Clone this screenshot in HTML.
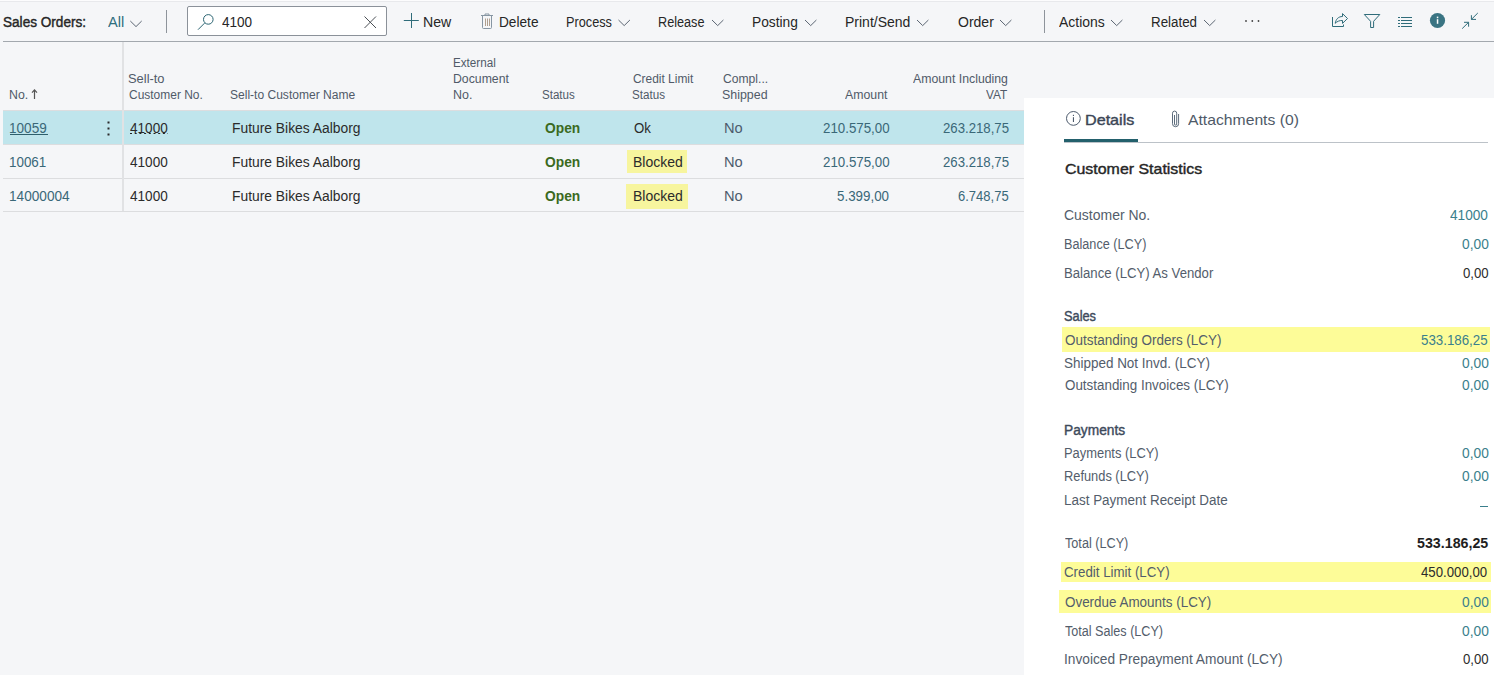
<!DOCTYPE html>
<html><head><meta charset="utf-8"><style>
html,body{margin:0;padding:0;}
body{width:1494px;height:675px;overflow:hidden;position:relative;background:#f5f6f8;font-family:"Liberation Sans",sans-serif;}
.t{position:absolute;white-space:nowrap;line-height:1;transform-origin:0 0;}
.a{position:absolute;}
</style></head><body>
<div class="a" style="left:0;top:0;width:1494px;height:1px;background:#fcfcfd"></div>
<div class="a" style="left:0;top:1px;width:1494px;height:1px;background:#e8e9ec"></div>
<div class="a" style="left:3px;top:41px;width:1491px;height:1px;background:#a3a8ae"></div>
<div class="a" style="left:166px;top:10px;width:1px;height:23px;background:#8e949b"></div>
<div class="a" style="left:1044px;top:10px;width:1px;height:23px;background:#8e949b"></div>
<div class="a" style="left:187px;top:6px;width:198px;height:28px;border:1px solid #8b9199;border-radius:2px;background:#fff"></div>
<div class="a" style="left:3px;top:110px;width:1021px;height:34px;background:#bfe5ec"></div>
<div class="a" style="left:3px;top:144px;width:1021px;height:1px;background:#dcdddf"></div>
<div class="a" style="left:3px;top:178px;width:1021px;height:1px;background:#dcdddf"></div>
<div class="a" style="left:3px;top:211px;width:1021px;height:1px;background:#dcdddf"></div>
<div class="a" style="left:3px;top:110px;width:1021px;height:1px;background:#dcdddf"></div>
<div class="a" style="left:122px;top:42px;width:2px;height:169px;background:#e1e2e4"></div>
<div class="a" style="left:627px;top:150px;width:60px;height:23px;background:#f7f59e"></div>
<div class="a" style="left:626px;top:184px;width:62px;height:25px;background:#f7f59e"></div>
<div class="a" style="left:1024px;top:98px;width:470px;height:577px;background:#fff"></div>
<div class="a" style="left:1064px;top:142px;width:424px;height:1px;background:#bcc2c8"></div>
<div class="a" style="left:1064px;top:139px;width:74px;height:3px;background:#23606c"></div>
<div class="a" style="left:1062px;top:327px;width:428px;height:25px;background:#fdfc98"></div>
<div class="a" style="left:1061px;top:562px;width:430px;height:20px;background:#fdfc98"></div>
<div class="a" style="left:1059px;top:590px;width:432px;height:23px;background:#fdfc98"></div>
<svg class="a" style="left:0;top:0" width="1494" height="675" viewBox="0 0 1494 675"><circle cx="208.3" cy="19.4" r="4.8" fill="none" stroke="#2a6472" stroke-width="1"/><line x1="204.6" y1="23.1" x2="198" y2="29.7" stroke="#2a6472" stroke-width="1"/><line x1="364.5" y1="16.5" x2="376" y2="28" stroke="#4a4f55" stroke-width="1"/><line x1="376" y1="16.5" x2="364.5" y2="28" stroke="#4a4f55" stroke-width="1"/><line x1="403.8" y1="20.5" x2="418.8" y2="20.5" stroke="#2f6c7a" stroke-width="1"/><line x1="411.5" y1="13" x2="411.5" y2="28" stroke="#2f6c7a" stroke-width="1"/><path d="M482.5 16 V27.5 Q482.5 28.5 483.5 28.5 H490.5 Q491.5 28.5 491.5 27.5 V16" fill="none" stroke="#8796a3" stroke-width="1"/><line x1="481" y1="15.5" x2="493" y2="15.5" stroke="#8796a3" stroke-width="1"/><path d="M485 15.5 V14 H489 V15.5" fill="none" stroke="#8796a3" stroke-width="1"/><line x1="485.5" y1="18.5" x2="485.5" y2="26" stroke="#b0a090" stroke-width="1"/><line x1="487.5" y1="18.5" x2="487.5" y2="26" stroke="#b0a090" stroke-width="1"/><line x1="489.5" y1="18.5" x2="489.5" y2="26" stroke="#b0a090" stroke-width="1"/><polyline points="130.3,21 136.0,26.6 141.70000000000002,21" fill="none" stroke="#5c6673" stroke-width="1"/><polyline points="618.5,20 624.2,25.6 629.9,20" fill="none" stroke="#5c6673" stroke-width="1"/><polyline points="712,20 717.7,25.6 723.4,20" fill="none" stroke="#5c6673" stroke-width="1"/><polyline points="805,20 810.7,25.6 816.4,20" fill="none" stroke="#5c6673" stroke-width="1"/><polyline points="917,20 922.7,25.6 928.4,20" fill="none" stroke="#5c6673" stroke-width="1"/><polyline points="1000,20 1005.7,25.6 1011.4,20" fill="none" stroke="#5c6673" stroke-width="1"/><polyline points="1111,20 1116.7,25.6 1122.4,20" fill="none" stroke="#5c6673" stroke-width="1"/><polyline points="1204,20 1209.7,25.6 1215.4,20" fill="none" stroke="#5c6673" stroke-width="1"/><circle cx="1246" cy="21" r="0.9" fill="#444"/><circle cx="1252.3" cy="21" r="0.9" fill="#444"/><circle cx="1258.5" cy="21" r="0.9" fill="#444"/><path d="M1332.5 17 V26.5 H1343.5 V24.5" fill="none" stroke="#2f6c7a" stroke-width="1"/><path d="M1335.2 23.3 C1336 19 1338.5 16.5 1342.5 16.5 V13.6 L1347.5 18.5 L1342.5 23.4 V20.5 C1339.5 20.3 1337 21.5 1335.2 23.3 Z" fill="none" stroke="#2f6c7a" stroke-width="1" stroke-linejoin="miter"/><path d="M1364.3 14.5 H1379.8 L1373.6 21.3 V27.5 H1370.6 V21.3 Z" fill="none" stroke="#2f6c7a" stroke-width="1"/><line x1="1398" y1="17.5" x2="1400" y2="17.5" stroke="#2f6c7a" stroke-width="1"/><line x1="1401" y1="17.5" x2="1412" y2="17.5" stroke="#2f6c7a" stroke-width="1"/><line x1="1398" y1="20.5" x2="1400" y2="20.5" stroke="#2f6c7a" stroke-width="1"/><line x1="1401" y1="20.5" x2="1412" y2="20.5" stroke="#2f6c7a" stroke-width="1"/><line x1="1398" y1="23.5" x2="1400" y2="23.5" stroke="#2f6c7a" stroke-width="1"/><line x1="1401" y1="23.5" x2="1412" y2="23.5" stroke="#2f6c7a" stroke-width="1"/><line x1="1398" y1="26.5" x2="1400" y2="26.5" stroke="#2f6c7a" stroke-width="1"/><line x1="1401" y1="26.5" x2="1412" y2="26.5" stroke="#2f6c7a" stroke-width="1"/><circle cx="1437.5" cy="20.5" r="7.6" fill="#3a7483"/><rect x="1436.8" y="16.6" width="1.5" height="1.6" fill="#fff"/><rect x="1436.8" y="19.2" width="1.5" height="4.6" fill="#fff"/><path d="M1477.8 13 L1471.4 19.4 M1471.4 15.2 V19.4 H1476" fill="none" stroke="#2f6c7a" stroke-width="1"/><path d="M1462.2 28.6 L1468.6 22.3 M1464 22.3 H1468.6 V26.7" fill="none" stroke="#2f6c7a" stroke-width="1"/><rect x="107.5" y="121.5" width="2" height="2" fill="#2a2a2a"/><rect x="107.5" y="127.5" width="2" height="2" fill="#2a2a2a"/><rect x="107.5" y="133.5" width="2" height="2" fill="#2a2a2a"/><rect x="10" y="134" width="38" height="1" fill="#2e5f6c"/><line x1="130" y1="133.5" x2="168" y2="133.5" stroke="#222" stroke-width="1" stroke-dasharray="2,2.7"/><circle cx="1073.4" cy="118.4" r="6.9" fill="none" stroke="#4c5a6c" stroke-width="1"/><rect x="1072.9" y="114.8" width="1.1" height="1.2" fill="#4c5a6c"/><rect x="1072.9" y="117.2" width="1.1" height="4.8" fill="#4c5a6c"/><path d="M1174.5 115 V124 A1.1 1.1 0 0 0 1176.7 124 V113.2 A2.1 2.1 0 0 0 1172.5 113.2 V123.7 A3.05 3.05 0 0 0 1178.6 123.7 V114" fill="none" stroke="#5b6b7b" stroke-width="1"/><path d="M34.5 89.5 V99 M32 92.6 L34.5 89.8 L37 92.6" fill="none" stroke="#555" stroke-width="1.2"/><rect x="1480" y="506" width="8" height="1" fill="#3a7f8c"/></svg>
<div class="t" id="sales" style="left:3.00px;top:15.15px;font-size:14px;font-weight:400;color:#262626;-webkit-text-stroke:0.4px #262626;transform:scaleX(0.9703)">Sales Orders:</div>
<div class="t" id="all" style="left:108.11px;top:15.15px;font-size:14px;font-weight:400;color:#2f6f7e;transform:scaleX(1.0450)">All</div>
<div class="t" id="q" style="left:222.00px;top:15.15px;font-size:14px;font-weight:400;color:#262626;transform:scaleX(0.9677)">4100</div>
<div class="t" id="new" style="left:422.88px;top:15.15px;font-size:14px;font-weight:400;color:#262626;transform:scaleX(1.0092)">New</div>
<div class="t" id="del" style="left:498.80px;top:15.15px;font-size:14px;font-weight:400;color:#262626;transform:scaleX(0.9760)">Delete</div>
<div class="t" id="proc" style="left:565.54px;top:15.15px;font-size:14px;font-weight:400;color:#262626;transform:scaleX(0.9084)">Process</div>
<div class="t" id="rel" style="left:658.22px;top:15.15px;font-size:14px;font-weight:400;color:#262626;transform:scaleX(0.9046)">Release</div>
<div class="t" id="post" style="left:752.49px;top:15.15px;font-size:14px;font-weight:400;color:#262626;transform:scaleX(0.9834)">Posting</div>
<div class="t" id="print" style="left:845.00px;top:15.15px;font-size:14px;font-weight:400;color:#262626;transform:scaleX(1.0000)">Print/Send</div>
<div class="t" id="order" style="left:957.81px;top:15.15px;font-size:14px;font-weight:400;color:#262626;transform:scaleX(1.0012)">Order</div>
<div class="t" id="act" style="left:1059.11px;top:15.15px;font-size:14px;font-weight:400;color:#262626;transform:scaleX(0.9963)">Actions</div>
<div class="t" id="relat" style="left:1151.34px;top:15.15px;font-size:14px;font-weight:400;color:#262626;transform:scaleX(0.9538)">Related</div>
<div class="t" id="h_no" style="left:8.76px;top:88.84px;font-size:12px;font-weight:400;color:#505a68;transform:scaleX(1.0273)">No.</div>
<div class="t" id="h_s1" style="left:127.82px;top:72.84px;font-size:12px;font-weight:400;color:#505a68;transform:scaleX(1.0741)">Sell-to</div>
<div class="t" id="h_s2" style="left:128.90px;top:88.84px;font-size:12px;font-weight:400;color:#505a68;transform:scaleX(0.9975)">Customer No.</div>
<div class="t" id="h_name" style="left:229.69px;top:88.84px;font-size:12px;font-weight:400;color:#505a68;transform:scaleX(1.0033)">Sell-to Customer Name</div>
<div class="t" id="h_e1" style="left:452.62px;top:56.84px;font-size:12px;font-weight:400;color:#505a68;transform:scaleX(0.9729)">External</div>
<div class="t" id="h_e2" style="left:452.58px;top:72.84px;font-size:12px;font-weight:400;color:#505a68;transform:scaleX(1.0224)">Document</div>
<div class="t" id="h_e3" style="left:452.54px;top:88.84px;font-size:12px;font-weight:400;color:#505a68;transform:scaleX(1.0381)">No.</div>
<div class="t" id="h_st" style="left:542.34px;top:88.84px;font-size:12px;font-weight:400;color:#505a68;transform:scaleX(0.9641)">Status</div>
<div class="t" id="h_c1" style="left:633.00px;top:72.84px;font-size:12px;font-weight:400;color:#505a68;transform:scaleX(0.9937)">Credit Limit</div>
<div class="t" id="h_c2" style="left:632.03px;top:88.84px;font-size:12px;font-weight:400;color:#505a68;transform:scaleX(0.9697)">Status</div>
<div class="t" id="h_p1" style="left:722.71px;top:72.84px;font-size:12px;font-weight:400;color:#505a68;transform:scaleX(1.0099)">Compl...</div>
<div class="t" id="h_p2" style="left:721.65px;top:88.84px;font-size:12px;font-weight:400;color:#505a68;transform:scaleX(1.0340)">Shipped</div>
<div class="t" id="h_am" style="left:844.78px;top:88.84px;font-size:12px;font-weight:400;color:#505a68;transform:scaleX(1.0252)">Amount</div>
<div class="t" id="h_ai1" style="left:912.60px;top:72.84px;font-size:12px;font-weight:400;color:#505a68;transform:scaleX(1.0241)">Amount Including</div>
<div class="t" id="h_ai2" style="left:986.00px;top:88.84px;font-size:12px;font-weight:400;color:#505a68;transform:scaleX(0.9851)">VAT</div>
<div class="t" id="r0_no" style="left:9.45px;top:121.15px;font-size:14px;font-weight:400;color:#3a6878;transform:scaleX(0.9687)">10059</div>
<div class="t" id="r0_cn" style="left:129.69px;top:121.15px;font-size:14px;font-weight:400;color:#2b2b2b;transform:scaleX(0.9702)">41000</div>
<div class="t" id="r0_nm" style="left:232.00px;top:121.15px;font-size:14px;font-weight:400;color:#2b2b2b;transform:scaleX(0.9892)">Future Bikes Aalborg</div>
<div class="t" id="r0_op" style="left:544.56px;top:121.15px;font-size:14px;font-weight:700;color:#3b6a1e;transform:scaleX(0.9846)">Open</div>
<div class="t" id="r0_cl" style="left:633.91px;top:121.15px;font-size:14px;font-weight:400;color:#2b2b2b;transform:scaleX(0.9444)">Ok</div>
<div class="t" id="r0_sh" style="left:724.27px;top:121.15px;font-size:14px;font-weight:400;color:#4d5b6c;transform:scaleX(1.0469)">No</div>
<div class="t" id="r0_am" style="left:822.52px;top:121.15px;font-size:14px;font-weight:400;color:#3a6878;transform:scaleX(0.9507)">210.575,00</div>
<div class="t" id="r0_ai" style="left:942.87px;top:121.15px;font-size:14px;font-weight:400;color:#3a6878;transform:scaleX(0.9423)">263.218,75</div>
<div class="t" id="r1_no" style="left:9.48px;top:155.15px;font-size:14px;font-weight:400;color:#3a6878;transform:scaleX(0.9578)">10061</div>
<div class="t" id="r1_cn" style="left:129.69px;top:155.15px;font-size:14px;font-weight:400;color:#2b2b2b;transform:scaleX(0.9702)">41000</div>
<div class="t" id="r1_nm" style="left:232.00px;top:155.15px;font-size:14px;font-weight:400;color:#2b2b2b;transform:scaleX(0.9892)">Future Bikes Aalborg</div>
<div class="t" id="r1_op" style="left:544.56px;top:155.15px;font-size:14px;font-weight:700;color:#3b6a1e;transform:scaleX(0.9846)">Open</div>
<div class="t" id="r1_cl" style="left:632.88px;top:155.15px;font-size:14px;font-weight:400;color:#2b2b2b;transform:scaleX(1.0004)">Blocked</div>
<div class="t" id="r1_sh" style="left:724.27px;top:155.15px;font-size:14px;font-weight:400;color:#4d5b6c;transform:scaleX(1.0469)">No</div>
<div class="t" id="r1_am" style="left:822.52px;top:155.15px;font-size:14px;font-weight:400;color:#3a6878;transform:scaleX(0.9507)">210.575,00</div>
<div class="t" id="r1_ai" style="left:942.87px;top:155.15px;font-size:14px;font-weight:400;color:#3a6878;transform:scaleX(0.9423)">263.218,75</div>
<div class="t" id="r2_no" style="left:9.42px;top:189.15px;font-size:14px;font-weight:400;color:#3a6878;transform:scaleX(0.9740)">14000004</div>
<div class="t" id="r2_cn" style="left:129.69px;top:189.15px;font-size:14px;font-weight:400;color:#2b2b2b;transform:scaleX(0.9702)">41000</div>
<div class="t" id="r2_nm" style="left:232.00px;top:189.15px;font-size:14px;font-weight:400;color:#2b2b2b;transform:scaleX(0.9892)">Future Bikes Aalborg</div>
<div class="t" id="r2_op" style="left:544.56px;top:189.15px;font-size:14px;font-weight:700;color:#3b6a1e;transform:scaleX(0.9846)">Open</div>
<div class="t" id="r2_cl" style="left:632.88px;top:189.15px;font-size:14px;font-weight:400;color:#2b2b2b;transform:scaleX(1.0004)">Blocked</div>
<div class="t" id="r2_sh" style="left:724.27px;top:189.15px;font-size:14px;font-weight:400;color:#4d5b6c;transform:scaleX(1.0469)">No</div>
<div class="t" id="r2_am" style="left:837.04px;top:189.15px;font-size:14px;font-weight:400;color:#3a6878;transform:scaleX(0.9550)">5.399,00</div>
<div class="t" id="r2_ai" style="left:958.07px;top:189.15px;font-size:14px;font-weight:400;color:#3a6878;transform:scaleX(0.9288)">6.748,75</div>
<div class="t" id="p_det" style="left:1085.33px;top:112.30px;font-size:15px;font-weight:400;color:#3b4656;-webkit-text-stroke:0.4px #3b4656;transform:scaleX(1.0759)">Details</div>
<div class="t" id="p_att" style="left:1188.00px;top:112.30px;font-size:15px;font-weight:400;color:#4f5a68;transform:scaleX(1.0477)">Attachments (0)</div>
<div class="t" id="p_cs" style="left:1064.84px;top:161.30px;font-size:15px;font-weight:400;color:#262626;-webkit-text-stroke:0.4px #262626;transform:scaleX(1.0619)">Customer Statistics</div>
<div class="t" id="s0_l" style="left:1064.20px;top:208.15px;font-size:14px;font-weight:400;color:#535d6b;transform:scaleX(0.9978)">Customer No.</div>
<div class="t" id="s0_v" style="left:1449.91px;top:208.15px;font-size:14px;font-weight:400;color:#3a7f8c;transform:scaleX(0.9747)">41000</div>
<div class="t" id="s1_l" style="left:1064.24px;top:237.15px;font-size:14px;font-weight:400;color:#535d6b;transform:scaleX(0.9046)">Balance (LCY)</div>
<div class="t" id="s1_v" style="left:1461.68px;top:237.15px;font-size:14px;font-weight:400;color:#3a7f8c;transform:scaleX(0.9829)">0,00</div>
<div class="t" id="s2_l" style="left:1064.22px;top:266.15px;font-size:14px;font-weight:400;color:#535d6b;transform:scaleX(0.9406)">Balance (LCY) As Vendor</div>
<div class="t" id="s2_v" style="left:1462.80px;top:266.15px;font-size:14px;font-weight:400;color:#2b2b2b;transform:scaleX(0.9420)">0,00</div>
<div class="t" id="s3_l" style="left:1065.21px;top:332.65px;font-size:14px;font-weight:400;color:#535d6b;transform:scaleX(0.9628)">Outstanding Orders (LCY)</div>
<div class="t" id="s3_v" style="left:1421.05px;top:332.65px;font-size:14px;font-weight:400;color:#3a7f8c;transform:scaleX(0.9509)">533.186,25</div>
<div class="t" id="s4_l" style="left:1064.22px;top:355.65px;font-size:14px;font-weight:400;color:#535d6b;transform:scaleX(0.9617)">Shipped Not Invd. (LCY)</div>
<div class="t" id="s4_v" style="left:1461.68px;top:355.65px;font-size:14px;font-weight:400;color:#3a7f8c;transform:scaleX(0.9829)">0,00</div>
<div class="t" id="s5_l" style="left:1065.21px;top:378.15px;font-size:14px;font-weight:400;color:#535d6b;transform:scaleX(0.9565)">Outstanding Invoices (LCY)</div>
<div class="t" id="s5_v" style="left:1461.68px;top:378.15px;font-size:14px;font-weight:400;color:#3a7f8c;transform:scaleX(0.9829)">0,00</div>
<div class="t" id="s6_l" style="left:1064.23px;top:446.15px;font-size:14px;font-weight:400;color:#535d6b;transform:scaleX(0.9217)">Payments (LCY)</div>
<div class="t" id="s6_v" style="left:1461.68px;top:446.15px;font-size:14px;font-weight:400;color:#3a7f8c;transform:scaleX(0.9829)">0,00</div>
<div class="t" id="s7_l" style="left:1064.23px;top:469.15px;font-size:14px;font-weight:400;color:#535d6b;transform:scaleX(0.9166)">Refunds (LCY)</div>
<div class="t" id="s7_v" style="left:1461.68px;top:469.15px;font-size:14px;font-weight:400;color:#3a7f8c;transform:scaleX(0.9829)">0,00</div>
<div class="t" id="s8_l" style="left:1064.22px;top:492.65px;font-size:14px;font-weight:400;color:#535d6b;transform:scaleX(0.9601)">Last Payment Receipt Date</div>
<div class="t" id="s9_l" style="left:1065.24px;top:536.15px;font-size:14px;font-weight:400;color:#535d6b;transform:scaleX(0.9045)">Total (LCY)</div>
<div class="t" id="s9_v" style="left:1417.10px;top:536.15px;font-size:14px;font-weight:700;color:#1e1e1e;transform:scaleX(1.0172)">533.186,25</div>
<div class="t" id="s10_l" style="left:1064.23px;top:565.15px;font-size:14px;font-weight:400;color:#535d6b;transform:scaleX(0.9492)">Credit Limit (LCY)</div>
<div class="t" id="s10_v" style="left:1421.41px;top:565.15px;font-size:14px;font-weight:400;color:#2b2b2b;transform:scaleX(0.9429)">450.000,00</div>
<div class="t" id="s11_l" style="left:1065.21px;top:595.15px;font-size:14px;font-weight:400;color:#535d6b;transform:scaleX(0.9590)">Overdue Amounts (LCY)</div>
<div class="t" id="s11_v" style="left:1461.68px;top:595.15px;font-size:14px;font-weight:400;color:#3a7f8c;transform:scaleX(0.9829)">0,00</div>
<div class="t" id="s12_l" style="left:1065.23px;top:623.65px;font-size:14px;font-weight:400;color:#535d6b;transform:scaleX(0.9001)">Total Sales (LCY)</div>
<div class="t" id="s12_v" style="left:1461.68px;top:623.65px;font-size:14px;font-weight:400;color:#3a7f8c;transform:scaleX(0.9829)">0,00</div>
<div class="t" id="s13_l" style="left:1064.23px;top:652.45px;font-size:14px;font-weight:400;color:#535d6b;transform:scaleX(0.9792)">Invoiced Prepayment Amount (LCY)</div>
<div class="t" id="s13_v" style="left:1462.80px;top:652.45px;font-size:14px;font-weight:400;color:#2b2b2b;transform:scaleX(0.9420)">0,00</div>
<div class="t" id="sec_sales" style="left:1064.07px;top:309.15px;font-size:14px;font-weight:400;color:#3d4a5b;-webkit-text-stroke:0.4px #3d4a5b;transform:scaleX(0.9136)">Sales</div>
<div class="t" id="sec_pay" style="left:1064.05px;top:422.65px;font-size:14px;font-weight:400;color:#3d4a5b;-webkit-text-stroke:0.4px #3d4a5b;transform:scaleX(0.9817)">Payments</div>
</body></html>
